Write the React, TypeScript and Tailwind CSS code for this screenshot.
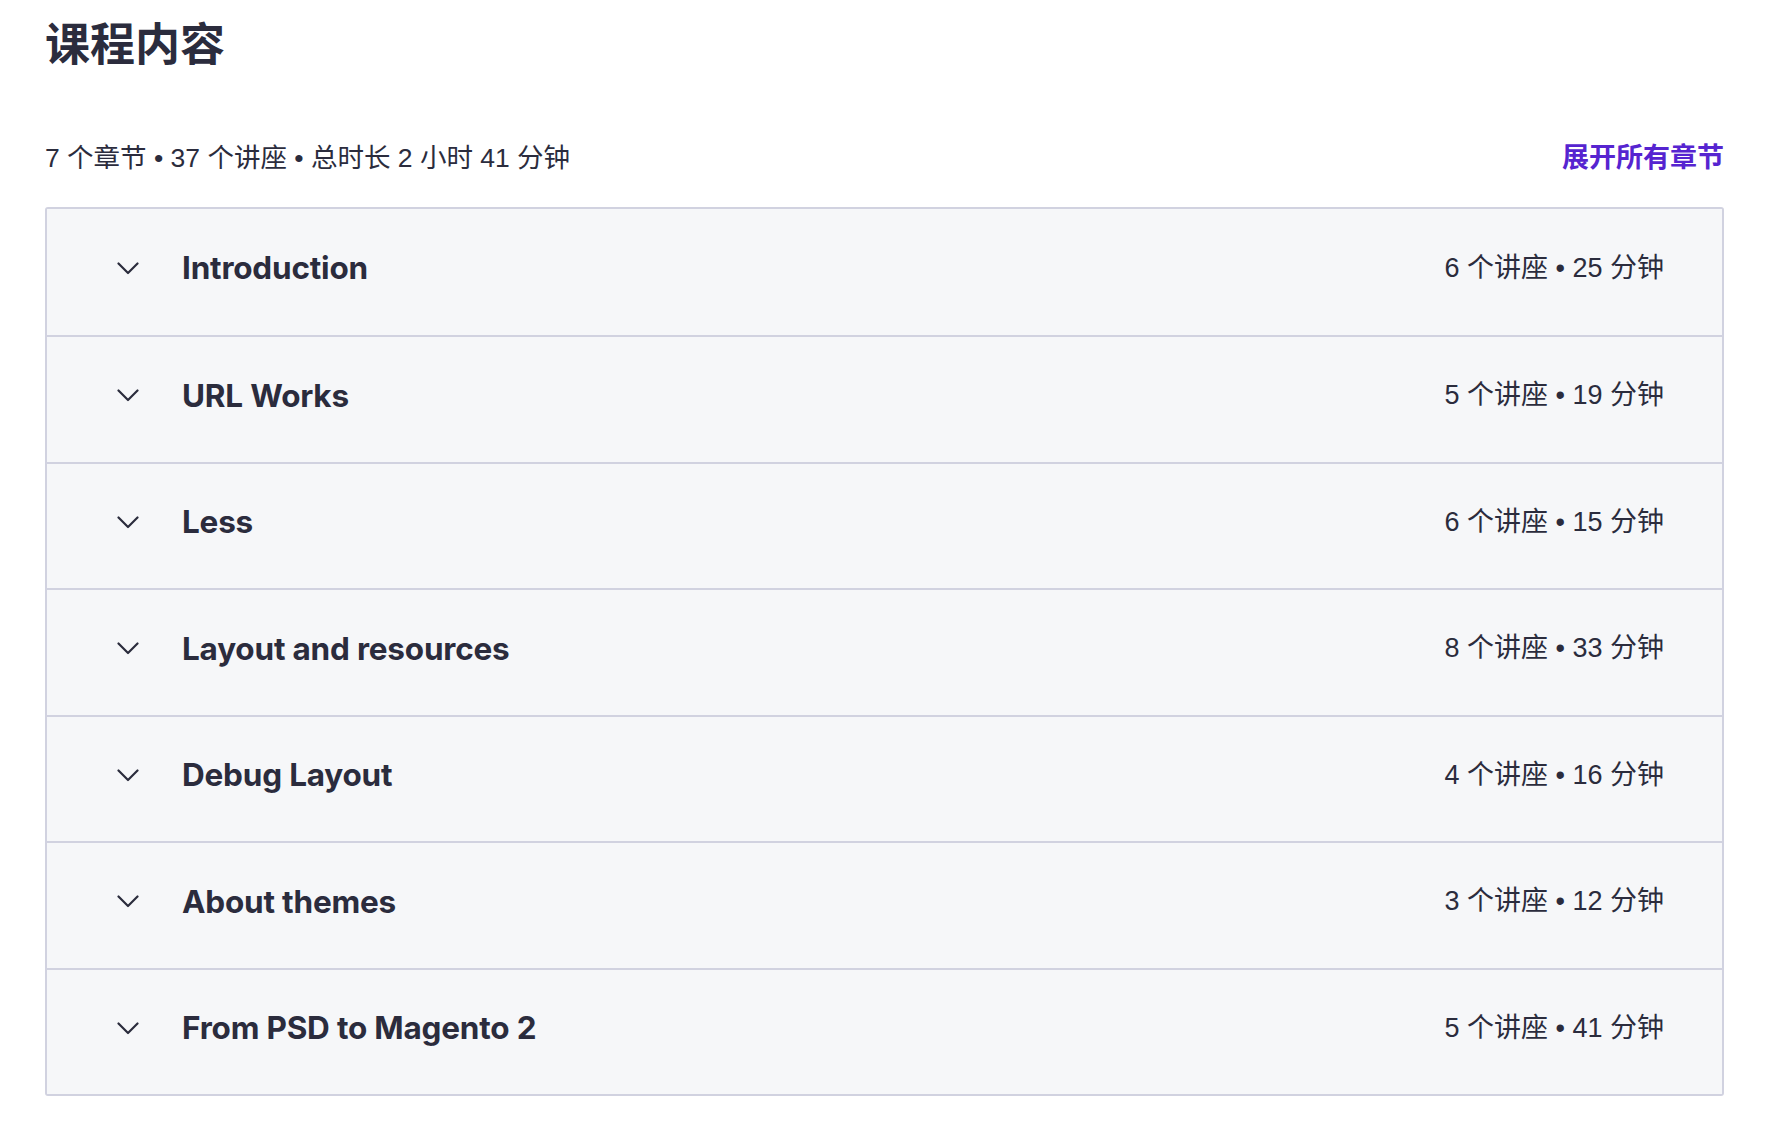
const sections = [
  { title: "Introduction", lectures: 6, minutes: 25 },
  { title: "URL Works", lectures: 5, minutes: 19 },
  { title: "Less", lectures: 6, minutes: 15 },
  { title: "Layout and resources", lectures: 8, minutes: 33 },
  { title: "Debug Layout", lectures: 4, minutes: 16 },
  { title: "About themes", lectures: 3, minutes: 12 },
  { title: "From PSD to Magento 2", lectures: 5, minutes: 41 },
];

function Chevron() {
  return (
    <svg width="22" height="13" viewBox="0 0 22 13" fill="none" className="shrink-0">
      <polyline
        points="1.5,1.5 11,11 20.5,1.5"
        stroke="#2b2c3d"
        strokeWidth="2.2"
        strokeLinecap="round"
        strokeLinejoin="round"
      />
    </svg>
  );
}

export default function App() {
  const heading = { fontFamily: '"Inter", "Noto Sans CJK SC", sans-serif' };
  const body = { fontFamily: '"Liberation Sans", "Noto Sans CJK SC", sans-serif' };

  return (
    <div className="min-h-screen w-full bg-white pl-[45px] pr-[50px] text-[#2b2c3d]">
      <h2 style={heading} className="pt-[18px] text-[45px] font-bold leading-[53px]">
        课程内容
      </h2>

      <div className="mt-[69px] flex items-center justify-between leading-[36px]">
        <span style={body} className="text-[26.5px]">
          7 个章节 • 37 个讲座 • 总时长 2 小时 41 分钟
        </span>
        <button style={heading} className="text-[27px] font-bold text-[#5624d0]">
          展开所有章节
        </button>
      </div>

      <div className="mt-[31px] overflow-hidden rounded-[3px] border-2 border-[#d1d2e0]">
        {sections.map((s, i) => (
          <div
            key={s.title}
            className={`flex items-center bg-[#f6f7f9] pb-[8px] pl-[70px] pr-[58px] ${
              i % 2 === 1 ? "h-[127px]" : "h-[126px]"
            } ${i > 0 ? "border-t-2 border-[#d1d2e0]" : ""}`}
          >
            <Chevron />
            <span style={heading} className="ml-[43px] text-[31.5px] font-bold tracking-[-0.2px]">
              {s.title}
            </span>
            <span style={body} className="ml-auto text-[27px]">
              {s.lectures} 个讲座 • {s.minutes} 分钟
            </span>
          </div>
        ))}
      </div>
    </div>
  );
}
